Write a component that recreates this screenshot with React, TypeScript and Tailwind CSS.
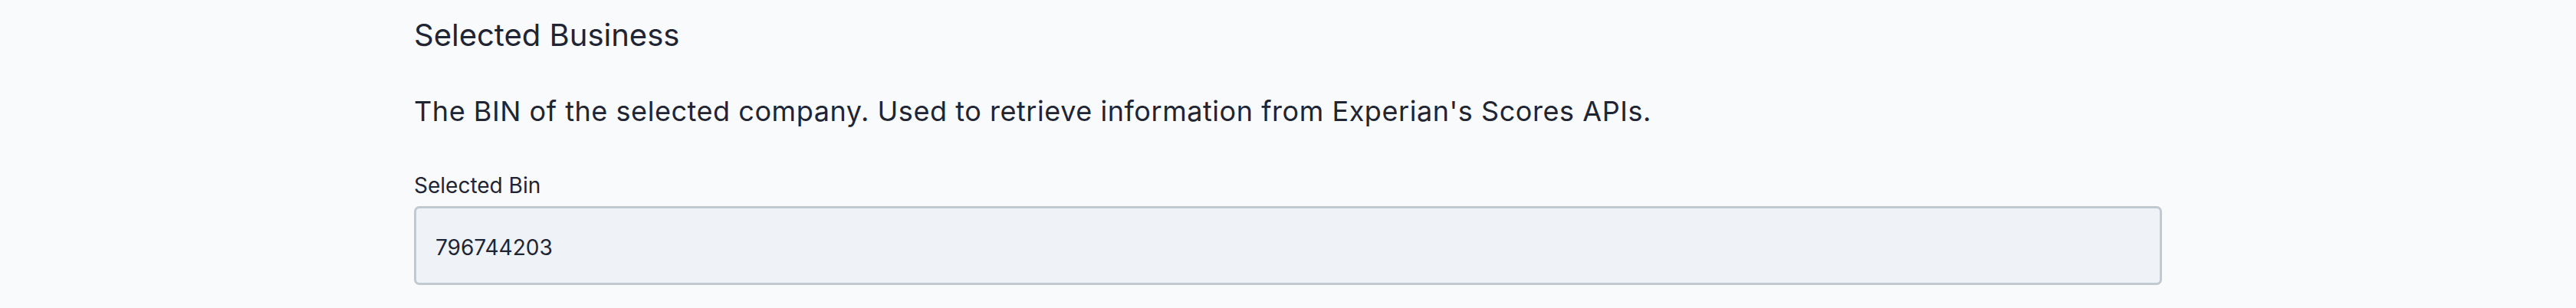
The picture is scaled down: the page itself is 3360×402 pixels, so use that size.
import React from "react";

export default function App() {
  return (
    <div className="min-h-[402px] w-full bg-[#f9fafc] text-[#1f2533]" style={{ fontFamily: "Inter, 'Noto Sans', sans-serif" }}>
      <div className="ml-[540px] w-[2280px] pt-[18px]">
        <h2 className="text-[40px] leading-[56px] font-normal">Selected Business</h2>
        <p className="mt-[44px] text-[36px] leading-[54px] tracking-[0.55px]">
          The BIN of the selected company. Used to retrieve information from Experian's Scores APIs.
        </p>
        <label className="mt-[50px] block text-[28px] leading-[40px]">Selected Bin</label>
        <div className="mt-[7px] flex h-[103px] items-center rounded-[7px] border-[3px] border-[#c0c9d0] bg-[#eff2f6] pl-[25px] pt-[5px] text-[28px]">
          796744203
        </div>
      </div>
    </div>
  );
}
